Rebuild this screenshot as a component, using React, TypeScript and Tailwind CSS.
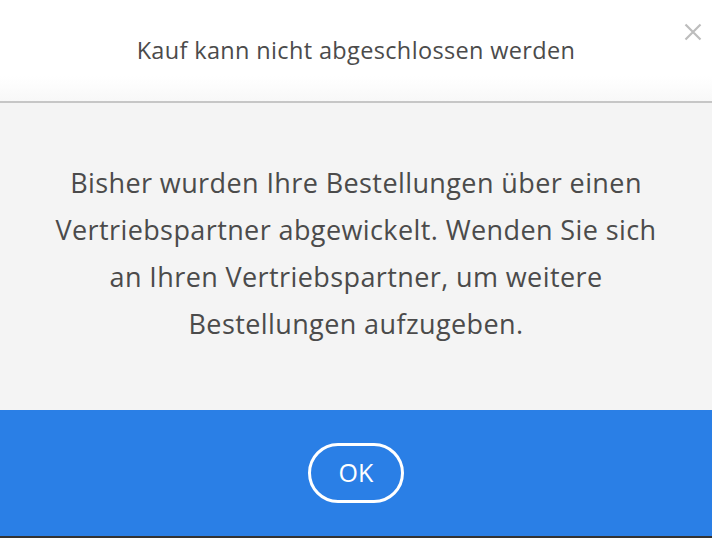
const App = () => {
  return (
    <div className="flex h-[538px] w-[712px] flex-col overflow-hidden bg-white font-['Open_Sans',sans-serif]">
      {/* Header */}
      <div className="relative flex h-[103px] shrink-0 items-center justify-center bg-gradient-to-b from-white from-75% to-[#f8f8f8] border-b-2 border-[#c6c6c6]">
        <h1 className="text-[23.5px] tracking-[0.35px] text-[#4b4b4b]">Kauf kann nicht abgeschlossen werden</h1>
        <button className="absolute right-[10px] top-[23px] text-[#bdbdbd]">
          <svg width="18" height="18" viewBox="0 0 18 18" fill="none" stroke="currentColor" strokeWidth="2.2">
            <path d="M1.5 1.5 L16.5 16.5 M16.5 1.5 L1.5 16.5" />
          </svg>
        </button>
      </div>

      {/* Body */}
      <div className="flex h-[307px] shrink-0 items-center justify-center bg-[#f4f4f4] px-6">
        <p className="pb-[8px] text-center text-[27px] leading-[47px] tracking-[0.4px] text-[#4b4b4b]">
          Bisher wurden Ihre Bestellungen über einen
          <br />
          Vertriebspartner abgewickelt. Wenden Sie sich
          <br />
          an Ihren Vertriebspartner, um weitere
          <br />
          Bestellungen aufzugeben.
        </p>
      </div>

      {/* Footer */}
      <div className="flex h-[126px] shrink-0 items-center justify-center bg-[#2a7fe6]">
        <button className="flex h-[60px] w-[96px] items-center justify-center rounded-full border-[3px] border-white text-[25px] text-white">
          OK
        </button>
      </div>
      <div className="h-[2px] bg-[#333333]" />
    </div>
  );
};

export default App;
